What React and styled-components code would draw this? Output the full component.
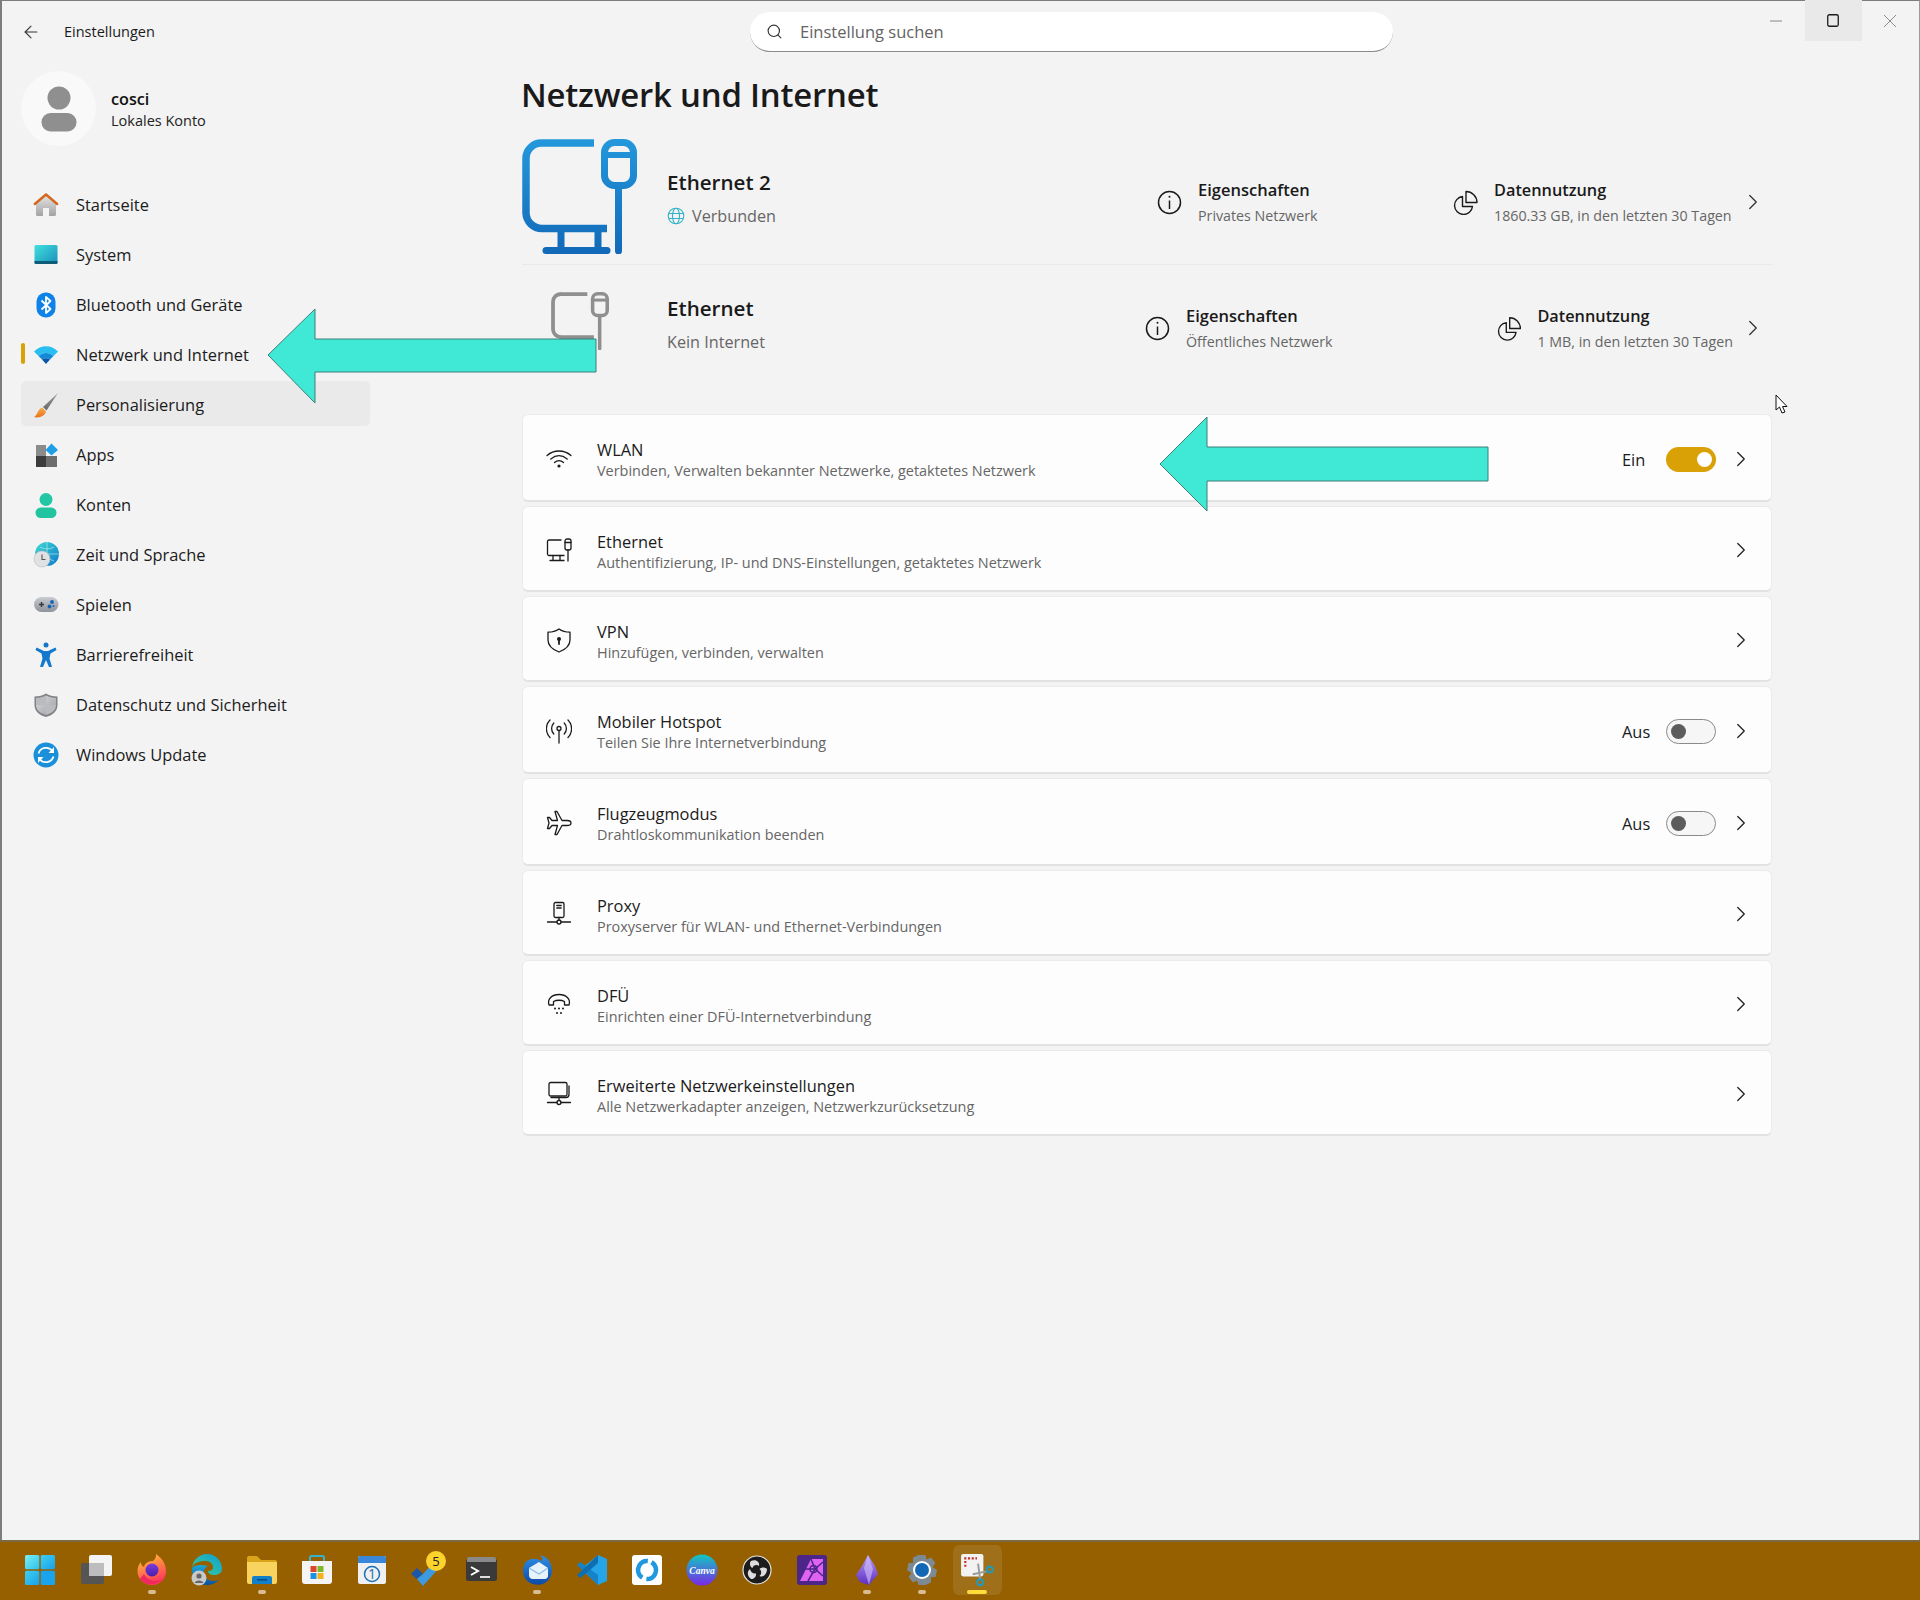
import React from "react";
import styled, { createGlobalStyle } from "styled-components";
import { ArrowLeft, Search, ChevronRight } from "lucide-react";

const FONT = `"Open Sans", "Noto Sans", "Liberation Sans", sans-serif`;

const Global = createGlobalStyle`
  html, body { margin: 0; padding: 0; background: #f3f3f3; }
  body { font-family: ${FONT}; color: #1b1b1b; }
  * { box-sizing: border-box; }
`;

const Root = styled.div`
  position: relative;
  width: 1920px;
  height: 1600px;
  display: flex;
  flex-direction: column;
  overflow: hidden;
`;
const Window = styled.div`
  flex: 1;
  min-height: 0;
  background: #f3f3f3;
  border-top: 1px solid #7d7d7d;
  border-left: 2px solid #7d7d7d;
  border-right: 1px solid #9a9a9a;
  display: flex;
  flex-direction: column;
`;
const TitleBar = styled.header`
  height: 52px;
  display: flex;
  align-items: flex-start;
  flex: none;
`;
const BackBtn = styled.div`
  width: 62px;
  height: 62px;
  padding: 21px 0 0 19px;
  color: #333;
  flex: none;
`;
const AppName = styled.div`
  width: 686px;
  font-size: 14.5px;
  line-height: 20px;
  margin-top: 21px;
  flex: none;
`;
const SearchBox = styled.div`
  width: 643px;
  height: 40px;
  margin-top: 11px;
  background: #fff;
  border-radius: 20px;
  border-bottom: 1.5px solid #8a8a8a;
  display: flex;
  align-items: center;
  gap: 17px;
  padding-left: 16px;
  color: #636363;
  font-size: 16.5px;
  flex: none;
`;
const Controls = styled.div`
  margin-left: auto;
  display: flex;
  height: 41px;
  margin-top: -1px;
  flex: none;
`;
const Ctl = styled.div`
  width: 57px;
  height: 41px;
  padding-right: 2px;
  display: flex;
  align-items: center;
  justify-content: center;
  background: ${(p) => (p.$hover ? "#e9e9e9" : "transparent")};
`;
const Body = styled.div`
  flex: 1;
  min-height: 0;
  display: flex;
`;
const Sidebar = styled.aside`
  width: 520px;
  flex: none;
  padding: 18px 0 0 19px;
`;
const Profile = styled.div`
  display: flex;
  align-items: center;
  gap: 15px;
  height: 75px;
`;
const Avatar = styled.div`
  width: 75px;
  height: 75px;
  border-radius: 50%;
  background: #f9f9f9;
  display: flex;
  align-items: center;
  justify-content: center;
  flex: none;
`;
const ProfileText = styled.div`
  display: flex;
  flex-direction: column;
  padding-top: 3px;
`;
const ProfileName = styled.div`
  font-size: 16.2px;
  font-weight: 600;
  line-height: 21px;
  color: #111;
`;
const ProfileSub = styled.div`
  font-size: 14.5px;
  line-height: 21px;
  color: #222;
`;
const Nav = styled.nav`
  margin-top: 35px;
  width: 349px;
  display: flex;
  flex-direction: column;
  gap: 5px;
`;
const NavItem = styled.div`
  position: relative;
  height: 45px;
  border-radius: 5px;
  display: flex;
  align-items: center;
  gap: 17px;
  padding: 2px 0 0 12px;
  font-size: 16.45px;
  color: #1b1b1b;
  background: ${(p) => (p.$hover ? "#eaeaea" : "transparent")};
  &::before {
    content: "";
    display: ${(p) => (p.$active ? "block" : "none")};
    position: absolute;
    left: 0;
    top: 12px;
    width: 4px;
    height: 21px;
    border-radius: 2px;
    background: #d9a106;
  }
`;
const Main = styled.main`
  width: 1251px;
  flex: none;
`;
const H1 = styled.h1`
  margin: 19px 0 0 -1px;
  font-size: 32.9px;
  line-height: 46px;
  font-weight: 600;
  color: #1a1a1a;
  letter-spacing: -0.2px;
  height: 47px;
`;
const NetPanel = styled.section`
  margin-top: 19px;
  margin-bottom: 23px;
`;
const NetRow = styled.div`
  height: 126px;
  display: flex;
  align-items: center;
  border-bottom: ${(p) => (p.$divider ? "1px solid #e9e9e9" : "none")};
  &:first-child { height: 127px; padding-top: 2px; }
`;
const NetIconBox = styled.div`
  width: 145px;
  padding-right: 30px;
  display: flex;
  justify-content: center;
  flex: none;
  margin-top: ${(p) => p.$lift}px;
`;
const NetName = styled.div`
  flex: 1;
  margin-top: -10px;
`;
const NetTitle = styled.div`
  font-size: 20.6px;
  font-weight: 600;
  line-height: 30px;
  color: #1a1a1a;
`;
const NetStatus = styled.div`
  margin-top: 7px;
  display: flex;
  align-items: center;
  gap: 7px;
  font-size: 16.2px;
  line-height: 24px;
  color: #666;
`;
const Prop = styled.div`
  width: ${(p) => p.$w}px;
  display: flex;
  align-items: center;
  gap: 16px;
  flex: none;
`;
const PropText = styled.div`
  padding-top: 1px;
`;
const PropTitle = styled.div`
  font-size: ${(p) => p.$size}px;
  font-weight: 600;
  line-height: 24px;
  color: #1a1a1a;
`;
const PropSub = styled.div`
  font-size: 14.25px;
  line-height: 24px;
  margin-top: 2px;
  color: #666;
  white-space: nowrap;
`;
const NetChev = styled.div`
  width: 40px;
  display: flex;
  justify-content: center;
  flex: none;
  color: #333;
`;
const List = styled.div`
  display: flex;
  flex-direction: column;
  gap: 4px;
  width: 1250px;
`;
const Card = styled.div`
  height: ${(p) => (p.$toggle ? 88 : 86)}px;
  background: #fdfdfd;
  border: 1px solid #ebebeb;
  border-bottom: 2px solid #e2e2e2;
  border-radius: 6px;
  display: flex;
  align-items: center;
  padding: 3px 23px 0 23px;
`;
const CardIcon = styled.div`
  width: 26px;
  height: 26px;
  margin-right: 25px;
  flex: none;
  color: #1b1b1b;
`;
const CardText = styled.div`
  flex: 1;
  padding-top: ${(p) => (p.$toggle ? 1 : 3)}px;
`;
const CardTitle = styled.div`
  font-size: 16.4px;
  line-height: 22px;
  color: #1b1b1b;
`;
const CardSub = styled.div`
  font-size: 14.45px;
  line-height: 20px;
  color: #666;
`;
const StateLabel = styled.div`
  width: 44px;
  font-size: 16.4px;
  color: #1b1b1b;
`;
const Toggle = styled.div`
  width: 50px;
  height: 25px;
  margin-top: 1px;
  border-radius: 13px;
  background: ${(p) => (p.$on ? "#d9a106" : "#f6f6f6")};
  border: ${(p) => (p.$on ? "none" : "1px solid #8a8a8a")};
  display: flex;
  align-items: center;
  justify-content: ${(p) => (p.$on ? "flex-end" : "flex-start")};
  padding: 0 4px;
  &::after {
    content: "";
    width: 15px;
    height: 15px;
    border-radius: 50%;
    background: ${(p) => (p.$on ? "#fff" : "#5c5c5c")};
  }
`;
const CardChev = styled.div`
  width: 14px;
  margin-left: 18px;
  display: flex;
  justify-content: center;
  color: #222;
  flex: none;
`;
const Taskbar = styled.footer`
  height: 60px;
  flex: none;
  background: #965f00;
  border-top: 2px solid #7c6a45;
  display: flex;
  align-items: center;
  padding-left: 12.5px;
  & > :first-child { margin-right: 2px; }
`;
const TaskItem = styled.div`
  position: relative;
  width: 55px;
  height: 50px;
  flex: none;
  display: flex;
  align-items: center;
  justify-content: center;
  padding: 0 3px;
  margin-top: -2px;
  border-radius: 8px;
  background-clip: content-box;
  background-color: ${(p) => (p.$active ? "rgba(255,255,255,.1)" : "transparent")};
  &::after {
    content: "";
    display: ${(p) => (p.$dot || p.$active ? "block" : "none")};
    position: absolute;
    bottom: 1px;
    left: 50%;
    transform: translateX(-50%);
    height: 4px;
    border-radius: 2px;
    width: ${(p) => (p.$active ? 20 : 8)}px;
    background: ${(p) => (p.$active ? "#fbdc3b" : "#d9bd92")};
  }
`;
const Overlay = styled.svg`
  position: absolute;
  left: ${(p) => p.$x}px;
  top: ${(p) => p.$y}px;
  overflow: visible;
`;

/* ---------- shared pictures ---------- */
const LG = ({ id, from, to, x1 = 0, y1 = 0, x2 = 0, y2 = 1 }) => (
  <linearGradient id={id} x1={x1} y1={y1} x2={x2} y2={y2}>
    <stop offset="0" stopColor={from} />
    <stop offset="1" stopColor={to} />
  </linearGradient>
);

const BigEthernet = ({ w, id, from, to }) => (
  <svg width={w} height={w} viewBox="0 0 115 115" fill="none" strokeLinecap="round">
    <defs>
      <linearGradient id={id} gradientUnits="userSpaceOnUse" x1="0" y1="0" x2="0" y2="115">
        <stop offset="0" stopColor={from} />
        <stop offset="1" stopColor={to} />
      </linearGradient>
    </defs>
    <g stroke={`url(#${id})`}>
      <path d="M72 4H20A15.500 15.500 0 0 0 4 19.500V74A16 16 0 0 0 20 89.500H85" strokeWidth="7.500" strokeLinecap="butt" />
      <path d="M39 92V110M76 92V110" strokeWidth="7" strokeLinecap="butt" />
      <path d="M24 111.500H85" strokeWidth="7" />
      <rect x="82.500" y="3.500" width="29" height="43" rx="10" strokeWidth="7" />
      <path d="M84 16H110" strokeWidth="6" strokeLinecap="butt" />
      <path d="M96.500 48V112" strokeWidth="7" />
    </g>
  </svg>
);

const InfoIcon = () => (
  <svg width="25" height="25" viewBox="0 0 25 25" fill="none" stroke="#1b1b1b" strokeWidth="1.500">
    <circle cx="12.500" cy="12.500" r="11" />
    <path d="M12.500 10.500V19" />
    <circle cx="12.500" cy="6.800" r="1" fill="#1b1b1b" stroke="none" />
  </svg>
);
const PieIcon = () => (
  <svg width="25" height="25" viewBox="0 0 25 25" fill="none" stroke="#1b1b1b" strokeWidth="1.400" strokeLinejoin="round">
    <path d="M9.500 6.500A9 9 0 1 0 19.500 16.500H9.500Z" />
    <path d="M13 1.500A11 11 0 0 1 24 12.500H13Z" />
  </svg>
);
const Globe = () => (
  <svg width="18" height="18" viewBox="0 0 18 18" fill="none" stroke="#35b4c9" strokeWidth="1.100">
    <circle cx="9" cy="9" r="7.800" />
    <ellipse cx="9" cy="9" rx="3.500" ry="7.800" />
    <path d="M1.500 6.500H16.500M1.500 11.500H16.500" />
  </svg>
);

/* ---------- sidebar icons ---------- */
const HomeI = () => (
  <svg width="26" height="26" viewBox="0 0 26 26">
    <defs><LG id="h1" from="#e4e4e4" to="#a3a3a3" /></defs>
    <path d="M3 11L13 3L23 11V22.500A1.500 1.500 0 0 1 21.500 24H16V16H10V24H4.500A1.500 1.500 0 0 1 3 22.500Z" fill="url(#h1)" />
    <path d="M1.800 12L13 2.500L24.200 12" fill="none" stroke="#d5661d" strokeWidth="2.400" strokeLinecap="round" strokeLinejoin="round" />
  </svg>
);
const SystemI = () => (
  <svg width="26" height="26" viewBox="0 0 26 26">
    <defs><LG id="s1" from="#41e1e0" to="#1a8db8" x2="1" /></defs>
    <rect x="1.500" y="3" width="23" height="19" rx="1.500" fill="url(#s1)" />
    <path d="M1.500 19H24.500V20.500A1.500 1.500 0 0 1 23 22H3A1.500 1.500 0 0 1 1.500 20.500Z" fill="#0e5c78" />
  </svg>
);
const BtI = () => (
  <svg width="26" height="26" viewBox="0 0 26 26">
    <rect x="3.500" y="0.500" width="19" height="25" rx="9" fill="#0f82e9" />
    <path d="M8.500 8.500L17.500 17L13 21V5L17.500 9L8.500 17.500" fill="none" stroke="#fff" strokeWidth="1.800" strokeLinejoin="round" />
  </svg>
);
const WifiI = () => (
  <svg width="26" height="26" viewBox="0 0 26 26">
    <path d="M1 9.500C8 2.500 18 2.500 25 9.500L20.500 14C15.500 10 10.500 10 5.500 14Z" fill="#29bdf0" />
    <path d="M5.500 14C10.500 10 15.500 10 20.500 14L17 17.500C14.500 15.800 11.500 15.800 9 17.500Z" fill="#128ad8" />
    <path d="M9 17.500C11.500 15.800 14.500 15.800 17 17.500L13 22Z" fill="#0a55a8" />
  </svg>
);
const BrushI = () => (
  <svg width="26" height="26" viewBox="0 0 26 26">
    <defs>
      <LG id="b1" from="#9a9a9a" to="#6a6a6a" />
      <LG id="b2" from="#f6b04c" to="#e8721c" />
    </defs>
    <path d="M25 1L10 15L13.500 18.500Z" fill="url(#b1)" />
    <path d="M9 15.500L13 19.500C12 24 6 26.500 1 25C4.500 23.500 4 18 9 15.500Z" fill="url(#b2)" />
  </svg>
);
const AppsI = () => (
  <svg width="26" height="26" viewBox="0 0 26 26">
    <rect x="3" y="3" width="10" height="11" fill="#8b8b8b" />
    <rect x="3" y="14" width="10" height="11" fill="#3c3c3c" />
    <rect x="13" y="14" width="11" height="11" fill="#6d6d6d" />
    <path d="M18.500 1.500L25 8L18.500 13.500L12.500 8Z" fill="#1d9fe8" />
  </svg>
);
const KontenI = () => (
  <svg width="26" height="26" viewBox="0 0 26 26">
    <circle cx="13" cy="7.500" r="6.500" fill="#22c7a3" />
    <rect x="2.500" y="15.500" width="21" height="10.500" rx="5.250" fill="#22c39f" />
  </svg>
);
const ZeitI = () => (
  <svg width="26" height="26" viewBox="0 0 26 26">
    <defs><LG id="z1" from="#3fdbd2" to="#0f78cc" x2="1" y2="1" /></defs>
    <circle cx="14" cy="12" r="12" fill="url(#z1)" />
    <path d="M2.500 12H26M14 0V24M7 5Q14 9 21 5M7 19Q14 15 21 19" stroke="#d6f6f5" strokeWidth=".8" fill="none" opacity=".7" />
    <circle cx="9" cy="17" r="8" fill="#dfe1e3" stroke="#bcbcbc" strokeWidth=".6" />
    <path d="M9 12.500V17.500H12.500" fill="none" stroke="#555" strokeWidth="1.100" />
  </svg>
);
const GameI = () => (
  <svg width="26" height="26" viewBox="0 0 26 26">
    <defs><LG id="g1" from="#c8cbd0" to="#8f939a" /></defs>
    <rect x="1" y="5" width="24.500" height="15" rx="7.500" fill="url(#g1)" />
    <path d="M6 12.500H11M8.500 10V15" stroke="#3a3a3a" strokeWidth="1.500" />
    <circle cx="19" cy="10" r="1.900" fill="#1464b4" />
    <circle cx="16.500" cy="14.500" r="1.900" fill="#1464b4" />
    <circle cx="20.500" cy="14" r="1" fill="#1464b4" />
  </svg>
);
const AccessI = () => (
  <svg width="26" height="26" viewBox="0 0 26 26">
    <circle cx="13" cy="3" r="2.500" fill="#1476c8" />
    <path d="M3.500 5.500L11 9H15L22.500 5.500L23.500 8L17.500 11.500L16.500 16.500L19 25H16L13 18L10 25H7L9.500 16.500L8.500 11.500L2.500 8Z" fill="#1478cc" />
  </svg>
);
const ShieldI = () => (
  <svg width="26" height="26" viewBox="0 0 26 26">
    <defs>
      <LG id="sh1" from="#dcdde0" to="#9a9ca0" x2="1" />
    </defs>
    <path d="M13 1.500C16 3.500 20 4.500 24.500 4.500V13C24.500 19.500 19 23.500 13 25C7 23.500 1.500 19.500 1.500 13V4.500C6 4.500 10 3.500 13 1.500Z" fill="#808285" />
    <path d="M13 3.500C16 5 19.500 6 23 6V13H13ZM13 13V23C8 21.500 3 18.500 3 13Z" fill="url(#sh1)" />
    <path d="M13 3.500V13H3V6C6.500 6 10 5 13 3.500ZM13 13H23C23 18.500 18 21.500 13 23Z" fill="#b9bbbe" />
  </svg>
);
const UpdateI = () => (
  <svg width="26" height="26" viewBox="0 0 26 26">
    <circle cx="13" cy="13" r="12.500" fill="#1a90da" />
    <g fill="none" stroke="#fff" strokeWidth="1.800">
      <path d="M5.500 11.500A8 8 0 0 1 19.500 9" />
      <path d="M20.500 14.500A8 8 0 0 1 6.500 17" />
    </g>
    <path d="M21 5V11H15.500ZM5 21V15H10.500Z" fill="#fff" />
  </svg>
);

/* ---------- line icons ---------- */
const Line = ({ children }) => (
  <svg width="26" height="26" viewBox="0 0 26 26" fill="none" stroke="currentColor" strokeWidth="1.300" strokeLinecap="round" strokeLinejoin="round">
    {children}
  </svg>
);
const LWifi = () => (
  <Line>
    <path d="M1 9.500C8 3.500 18 3.500 25 9.500" />
    <path d="M4.800 13C10 8.800 16 8.800 21.200 13" />
    <path d="M8.500 16.500C11.500 14 14.500 14 17.500 16.500" />
    <circle cx="13" cy="20" r="1.600" fill="currentColor" stroke="none" />
  </Line>
);
const LEth = () => (
  <Line>
    <path d="M15 3H3A1.500 1.500 0 0 0 1.500 4.500V17A1.500 1.500 0 0 0 3 18.500H18" />
    <path d="M7 18.500V23M14 18.500V23M4 23.500H18" />
    <rect x="19" y="2" width="6" height="11" rx="2" />
    <path d="M19 5.500H25M22 13V24" />
  </Line>
);
const LVpn = () => (
  <Line>
    <path d="M13 2C16 4.200 19.500 5.200 24 5.200V13C24 18.800 19.500 22.500 13 25C6.500 22.500 2 18.800 2 13V5.200C6.500 5.200 10 4.200 13 2Z" />
    <circle cx="13" cy="12" r="2" fill="currentColor" stroke="none" />
    <path d="M13 13V17" strokeWidth="1.800" />
  </Line>
);
const LHotspot = () => (
  <Line>
    <circle cx="13" cy="10.500" r="2" />
    <path d="M13 12.500V25" />
    <path d="M7.800 16A8 8 0 0 1 7.800 5M18.200 5A8 8 0 0 1 18.200 16" />
    <path d="M4 19.500A12.500 12.500 0 0 1 4 2M22 2A12.500 12.500 0 0 1 22 19.500" />
  </Line>
);
const LPlane = () => (
  <Line>
    <path d="M25 13C25 11.500 23 10.500 21 10.500H16L11 1.500H9L11.500 10.500H6L3.500 7.500H1.500L3 13L1.500 18.500H3.500L6 15.500H11.500L9 24.500H11L16 15.500H21C23 15.500 25 14.500 25 13Z" />
  </Line>
);
const LProxy = () => (
  <Line>
    <rect x="8" y="1.500" width="10" height="15" rx="1.500" />
    <path d="M10.800 4.500H15.200M10.800 7H15.200" />
    <path d="M13 16.500V19.500" />
    <circle cx="13" cy="21" r="2" />
    <path d="M1.500 21H11M15 21H24.500" />
  </Line>
);
const LDial = () => (
  <Line>
    <path d="M3 14C1 8 6 3.500 13 3.500C20 3.500 25 8 23 14H18.500V10.500C15.500 8.800 10.500 8.800 7.500 10.500V14Z" />
    <g fill="currentColor" stroke="none">
      <circle cx="9" cy="17.500" r="1" /><circle cx="13" cy="17.500" r="1" /><circle cx="17" cy="17.500" r="1" />
      <circle cx="11" cy="22" r="1" /><circle cx="15" cy="22" r="1" />
    </g>
  </Line>
);
const LAdv = () => (
  <Line>
    <rect x="3" y="1.500" width="18" height="13.500" rx="1.500" />
    <path d="M5 16.500V16.500H20C22 16.500 23 15.500 23 13.500V5" />
    <path d="M13 16.500V19.500" />
    <circle cx="13" cy="21.500" r="2" />
    <path d="M1.500 21.500H11M15 21.500H24.500" />
  </Line>
);

/* ---------- taskbar icons ---------- */
const I = ({ children, s = 32 }) => <svg width={s} height={s} viewBox="0 0 32 32">{children}</svg>;

const StartI = () => (
  <I>
    <defs>
      <LG id="st1" from="#7af0f4" to="#2cc0ea" x2="1" y2="1" />
      <LG id="st2" from="#3fd0f2" to="#18a0e8" x2="1" y2="1" />
    </defs>
    <rect x="1" y="1" width="14.300" height="14.300" rx="1.500" fill="url(#st1)" />
    <rect x="16.700" y="1" width="14.300" height="14.300" rx="1.500" fill="url(#st2)" />
    <rect x="1" y="16.700" width="14.300" height="14.300" rx="1.500" fill="url(#st2)" />
    <rect x="16.700" y="16.700" width="14.300" height="14.300" rx="1.500" fill="#1ba4ee" />
  </I>
);
const TaskViewI = () => (
  <I>
    <rect x="0" y="9" width="23" height="21" rx="2" fill="#555" />
    <rect x="8" y="1" width="23" height="21" rx="2" fill="#f4f4f4" />
    <rect x="8" y="9" width="15" height="13" fill="#bdbdbd" />
  </I>
);
const FoxI = () => (
  <I>
    <defs>
      <LG id="f1" from="#ffcf2f" to="#ff3b5c" x2=".4" />
      <LG id="f2" from="#7a3ce0" to="#4a1fa8" />
    </defs>
    <path d="M20 0C24 3 30 8 30 17C30 25 24 31 16 31C8 31 1.500 25 1.500 17C1.500 13 3 10 5 8C5 11 6 12 8 13C9 8 14 7 17 7C20 5 20 2 20 0Z" fill="url(#f1)" />
    <circle cx="16" cy="16" r="6.500" fill="url(#f2)" />
    <path d="M4 25C8 31 20 33 27 25C22 28 12 28 8 20Z" fill="#f0285f" />
  </I>
);
const EdgeI = () => (
  <I>
    <defs>
      <LG id="e1" from="#3bd08a" to="#0f9fd8" x2="1" y1="1" y2="0" />
      <LG id="e2" from="#1aa8d8" to="#0c4fa0" />
    </defs>
    <path d="M1 14C2 5 9 0 16 0C25 0 31 7 31 15C31 19 27 21 23 21C19 21 17 19 17 17C20 17 22 16 22 13C22 9 18 7 14 7C8 7 2 9 1 14Z" fill="url(#e1)" />
    <path d="M1 14C0 24 8 31 16 31C20 31 25 29 28 26C22 28 15 27 13 21C12 17 14 13 17 12C10 10 3 11 1 14Z" fill="url(#e2)" />
    <circle cx="8" cy="24" r="7.500" fill="#c9c9c9" />
    <circle cx="8" cy="22" r="2.600" fill="#666" />
    <path d="M3.500 29C4.500 25.500 11.500 25.500 12.500 29Z" fill="#666" />
  </I>
);
const FolderI = () => (
  <I>
    <path d="M1 4A2 2 0 0 1 3 2H11L15 6H29A2 2 0 0 1 31 8V14H1Z" fill="#d9a41a" />
    <path d="M1 8H31V28A2 2 0 0 1 29 30H3A2 2 0 0 1 1 28Z" fill="#f8d45e" />
    <path d="M6 30V24A2 2 0 0 1 8 22H24A2 2 0 0 1 26 24V30Z" fill="#1280c8" />
    <rect x="11" y="25" width="10" height="1.600" fill="#0b4f8a" />
  </I>
);
const StoreI = () => (
  <I>
    <path d="M9 8V3.500A1.500 1.500 0 0 1 10.500 2H21.500A1.500 1.500 0 0 1 23 3.500V8" fill="none" stroke="#35b4c9" strokeWidth="2" />
    <path d="M1 7H31V27A3 3 0 0 1 28 30H4A3 3 0 0 1 1 27Z" fill="#f4f4f4" />
    <rect x="9.500" y="12" width="6" height="6" fill="#e0452c" />
    <rect x="16.500" y="12" width="6" height="6" fill="#7cb82a" />
    <rect x="9.500" y="19" width="6" height="6" fill="#1e90e0" />
    <rect x="16.500" y="19" width="6" height="6" fill="#f2b21a" />
  </I>
);
const CalI = () => (
  <I>
    <rect x="2" y="2" width="28" height="28" rx="2" fill="#eef0f2" />
    <path d="M2 4A2 2 0 0 1 4 2H28A2 2 0 0 1 30 4V9H2Z" fill="#3a86d8" />
    <circle cx="16" cy="20" r="7.500" fill="none" stroke="#1b6fb8" strokeWidth="1.500" />
    <text x="16" y="25" textAnchor="middle" fontSize="14" fontFamily={FONT} fill="#1b6fb8">1</text>
  </I>
);
const TodoI = () => (
  <svg width="36" height="36" viewBox="0 0 36 36" style={{ overflow: "visible" }}>
    <path d="M2 22L8 16L14 22L8 27Z" fill="#1c57a8" />
    <path d="M8 27L14 34L30 16L24 11L14 22Z" fill="#3b9ae0" />
    <circle cx="27" cy="9" r="10" fill="#fbd32c" />
    <text x="27" y="14" textAnchor="middle" fontSize="13" fontFamily={FONT} fill="#222">5</text>
  </svg>
);
const TermI = () => (
  <I>
    <rect x="0" y="2" width="31" height="22" rx="2" transform="translate(0 3)" fill="#3a3a3a" />
    <path d="M2 5A2 2 0 0 1 4 3H29A2 2 0 0 1 31 5V8H2Z" fill="#8a8a8a" transform="translate(-1 0)" />
    <path d="M5 13L12 17L5 21" fill="none" stroke="#fff" strokeWidth="2" />
    <path d="M14 23H24" stroke="#ddd" strokeWidth="2" />
  </I>
);
const BirdI = () => (
  <I>
    <defs><LG id="t1" from="#2f8fe6" to="#0c4aa6" /></defs>
    <path d="M4 9C1 14 0 26 12 30C22 33 30 27 31 17C31 9 27 3 19 1C22 4 22 6 20 7C14 3 7 5 4 9Z" fill="url(#t1)" />
    <path d="M8 14L18 8L27 14V22C27 24 25 25 24 25H12C9 25 8 23 8 21Z" fill="#e8f2fb" />
    <path d="M8 14L18 20L27 14" fill="none" stroke="#8fbde4" strokeWidth="1.200" />
  </I>
);
const CodeI = () => (
  <I>
    <path d="M22 1L31 5V27L22 31L5 15Z" fill="#25a5e8" />
    <path d="M22 1V31L1 11L4.500 8L22 21Z" fill="#1682c8" />
    <path d="M1 21L4.500 24L22 9V1Z" fill="#0e6fb0" />
  </I>
);
const SyncI = () => (
  <I>
    <rect x="1" y="1" width="30" height="30" rx="3" fill="#fff" />
    <circle cx="16" cy="16" r="9" fill="none" stroke="#2098e0" strokeWidth="4.500" strokeDasharray="24 4.300" transform="rotate(-60 16 16)" />
  </I>
);
const CanvaI = () => (
  <I>
    <defs><LG id="c1" from="#10c8c0" to="#7a28e8" /></defs>
    <circle cx="16" cy="16" r="15.500" fill="url(#c1)" />
    <text x="16" y="19.500" textAnchor="middle" fontSize="9.500" fontStyle="italic" fontWeight="700" fontFamily={`"Liberation Serif", serif`} fill="#fff">Canva</text>
  </I>
);
const ObsI = () => (
  <I>
    <circle cx="16" cy="16" r="14" fill="#1c1c1c" stroke="#e6e6e6" strokeWidth="1.200" />
    <g fill="#ddd">
      <path d="M10 7C15 5 19 8 18 12C16 10 12 11 11.500 14C9 13 8 9 10 7Z" />
      <path d="M26 15C26 20 22 24 18.500 22C20.500 20.500 21 17 18.500 15C20.500 13 24 13 26 15Z" />
      <path d="M10 25C6 22 6 17 9 15C9.500 18 12 20 15 19.500C15.500 22.500 13 25.500 10 25Z" />
    </g>
  </I>
);
const AffinityI = () => (
  <I>
    <rect x="1" y="1" width="30" height="30" rx="3" fill="#4b2588" />
    <path d="M4 27L15 5H27V27Z" fill="#dd63f0" />
    <path d="M15 5L19 15L12 27M27 8L19 15L27 22M19 15H8" fill="none" stroke="#4b2588" strokeWidth="1.500" />
    <circle cx="17.500" cy="15" r="3.500" fill="none" stroke="#4b2588" strokeWidth="1.500" />
  </I>
);
const ObsidianI = () => (
  <I>
    <defs><LG id="ob1" from="#b79cf5" to="#5d2ec4" /></defs>
    <path d="M17 1L24 12L27 20L18 31L9 28L5 21L11 12Z" fill="url(#ob1)" />
    <path d="M17 1L13 14L18 31L22 15Z" fill="#d4c2fa" opacity=".6" />
  </I>
);
const GearI = () => (
  <I>
    <path d="M12.500 1H19.500L20.500 5.500L25 3.500L29.500 9L26.500 13L31 16L29.500 23L25 23L25 28.500L19.500 31H12.500L11 26.500L7 28.500L2.500 23L5.500 19L1 16L2.500 9L7 9L7 3.500Z" fill="#7d8a94" />
    <circle cx="16" cy="16" r="9" fill="#fff" />
    <circle cx="16" cy="16" r="7" fill="#1268b4" />
  </I>
);
const SnipI = () => (
  <I s={34}>
    <rect x="1" y="1" width="21" height="21" rx="2" fill="#f2f2f2" />
    <path d="M5 13V5H16" fill="none" stroke="#c4302b" strokeWidth="2" strokeDasharray="2 1.500" />
    <path d="M26 17L12 20M19 25L17 10" fill="none" stroke="#9a9a9a" strokeWidth="1.800" />
    <circle cx="28" cy="15.500" r="2.800" fill="none" stroke="#1c9cc0" strokeWidth="1.800" />
    <circle cx="19" cy="27.500" r="2.800" fill="none" stroke="#1c9cc0" strokeWidth="1.800" />
  </I>
);

/* ---------- data ---------- */
const NAV = [
  ["Startseite", HomeI], ["System", SystemI], ["Bluetooth und Geräte", BtI],
  ["Netzwerk und Internet", WifiI, "active"], ["Personalisierung", BrushI, "hover"],
  ["Apps", AppsI], ["Konten", KontenI], ["Zeit und Sprache", ZeitI], ["Spielen", GameI],
  ["Barrierefreiheit", AccessI], ["Datenschutz und Sicherheit", ShieldI], ["Windows Update", UpdateI],
];
const ROWS = [
  ["WLAN", "Verbinden, Verwalten bekannter Netzwerke, getaktetes Netzwerk", LWifi, "Ein"],
  ["Ethernet", "Authentifizierung, IP- und DNS-Einstellungen, getaktetes Netzwerk", LEth],
  ["VPN", "Hinzufügen, verbinden, verwalten", LVpn],
  ["Mobiler Hotspot", "Teilen Sie Ihre Internetverbindung", LHotspot, "Aus"],
  ["Flugzeugmodus", "Drahtloskommunikation beenden", LPlane, "Aus"],
  ["Proxy", "Proxyserver für WLAN- und Ethernet-Verbindungen", LProxy],
  ["DFÜ", "Einrichten einer DFÜ-Internetverbindung", LDial],
  ["Erweiterte Netzwerkeinstellungen", "Alle Netzwerkadapter anzeigen, Netzwerkzurücksetzung", LAdv],
];
const TASK = [
  [StartI], [TaskViewI], [FoxI, 1], [EdgeI], [FolderI, 1], [StoreI], [CalI], [TodoI], [TermI],
  [BirdI, 1], [CodeI], [SyncI], [CanvaI], [ObsI], [AffinityI], [ObsidianI, 1], [GearI, 1], [SnipI, 0, 1],
];

const NetProp = ({ w, icon, title, sub, size }) => (
  <Prop $w={w}>
    {icon}
    <PropText>
      <PropTitle $size={size}>{title}</PropTitle>
      <PropSub>{sub}</PropSub>
    </PropText>
  </Prop>
);

export default function App() {
  return (
    <Root>
      <Global />
      <Window>
        <TitleBar>
          <BackBtn><ArrowLeft size={20} strokeWidth={1.3} /></BackBtn>
          <AppName>Einstellungen</AppName>
          <SearchBox>
            <Search size={17} strokeWidth={1.6} color="#333" />
            <span>Einstellung suchen</span>
          </SearchBox>
          <Controls>
            <Ctl>
              <svg width="12" height="2"><path d="M0 1H12" stroke="#9a9a9a" strokeWidth="1.200" /></svg>
            </Ctl>
            <Ctl $hover>
              <svg width="12" height="13"><rect x=".75" y=".75" width="10.500" height="11.500" rx="1.500" fill="none" stroke="#1b1b1b" strokeWidth="1.300" /></svg>
            </Ctl>
            <Ctl>
              <svg width="14" height="14"><path d="M1 1L13 13M13 1L1 13" stroke="#8c8c8c" strokeWidth="1" /></svg>
            </Ctl>
          </Controls>
        </TitleBar>
        <Body>
          <Sidebar>
            <Profile>
              <Avatar>
                <svg width="36" height="46" viewBox="0 0 36 46">
                  <circle cx="18" cy="12" r="11.500" fill="#8f8f8f" />
                  <rect x="0.500" y="27" width="35" height="18.500" rx="9" fill="#8f8f8f" />
                </svg>
              </Avatar>
              <ProfileText>
                <ProfileName>cosci</ProfileName>
                <ProfileSub>Lokales Konto</ProfileSub>
              </ProfileText>
            </Profile>
            <Nav>
              {NAV.map(([label, Icon, state]) => (
                <NavItem key={label} $active={state === "active"} $hover={state === "hover"}>
                  <Icon />
                  <span>{label}</span>
                </NavItem>
              ))}
            </Nav>
          </Sidebar>
          <Main>
            <H1>Netzwerk und Internet</H1>
            <NetPanel>
              <NetRow $divider>
                <NetIconBox $lift={-12}><BigEthernet w={115} id="be1" from="#2498dc" to="#1169b8" /></NetIconBox>
                <NetName>
                  <NetTitle>Ethernet 2</NetTitle>
                  <NetStatus><Globe />Verbunden</NetStatus>
                </NetName>
                <NetProp w={296} size={16.5} icon={<InfoIcon />} title="Eigenschaften" sub="Privates Netzwerk" />
                <NetProp w={280} size={16.3} icon={<PieIcon />} title="Datennutzung" sub="1860.33 GB, in den letzten 30 Tagen" />
                <NetChev><ChevronRight size={26} strokeWidth={1.2} /></NetChev>
              </NetRow>
              <NetRow>
                <NetIconBox $lift={-14}><BigEthernet w={58} id="be2" from="#8f8f8f" to="#8f8f8f" /></NetIconBox>
                <NetName>
                  <NetTitle>Ethernet</NetTitle>
                  <NetStatus>Kein Internet</NetStatus>
                </NetName>
                <NetProp w={352} size={16.5} icon={<InfoIcon />} title="Eigenschaften" sub="Öffentliches Netzwerk" />
                <NetProp w={236} size={16.3} icon={<PieIcon />} title="Datennutzung" sub="1 MB, in den letzten 30 Tagen" />
                <NetChev><ChevronRight size={26} strokeWidth={1.2} /></NetChev>
              </NetRow>
            </NetPanel>
            <List>
              {ROWS.map(([title, sub, Icon, state]) => (
                <Card key={title} $toggle={!!state}>
                  <CardIcon><Icon /></CardIcon>
                  <CardText $toggle={!!state}>
                    <CardTitle>{title}</CardTitle>
                    <CardSub>{sub}</CardSub>
                  </CardText>
                  {state && <StateLabel>{state}</StateLabel>}
                  {state && <Toggle $on={state === "Ein"} />}
                  <CardChev><ChevronRight size={26} strokeWidth={1.2} style={{ flex: "none" }} /></CardChev>
                </Card>
              ))}
            </List>
          </Main>
        </Body>
      </Window>
      <Taskbar>
        {TASK.map(([Icon, dot, active], i) => (
          <TaskItem key={i} $dot={!!dot} $active={!!active}><Icon /></TaskItem>
        ))}
      </Taskbar>

      <Overlay $x={268} $y={309} width="328" height="94" viewBox="0 0 328 94">
        <polygon points="0,46 47,0 47,30 328,30 328,63 47,63 47,94" fill="#40e8d6" stroke="#3f7f7a" strokeWidth="1" />
      </Overlay>
      <Overlay $x={1160} $y={417} width="328" height="94" viewBox="0 0 328 94">
        <polygon points="0,47 47,0 47,30 328,30 328,64 47,64 47,94" fill="#40e8d6" stroke="#3f7f7a" strokeWidth="1" />
      </Overlay>
      <Overlay $x={1775} $y={394} width="15" height="21" viewBox="0 0 15 21">
        <path d="M1 1V16L4.500 13L7 19L10 18L7.500 12.500H12Z" fill="#fff" stroke="#111" strokeWidth="1" />
      </Overlay>
    </Root>
  );
}
